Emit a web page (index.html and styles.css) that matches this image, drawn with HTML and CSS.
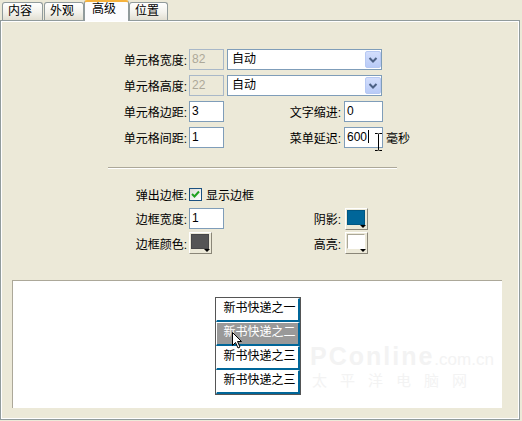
FILE: index.html
```html
<!DOCTYPE html>
<html lang="zh">
<head>
  <meta charset="utf-8">
  <title>菜单属性 - 高级</title>
  <link rel="stylesheet" href="styles.css">
</head>
<body>

  <div class="dialog">
    <div class="tabs">
      <div class="tab tab-1">内容</div>
      <div class="tab tab-2">外观</div>
      <div class="tab active">高级</div>
      <div class="tab tab-4">位置</div>
    </div>

    <div class="panel">
      <!-- cell settings -->
      <div class="grid cells">
        <span class="lbl">单元格宽度:</span>
        <div class="textbox disabled">82</div>
        <div class="select">
          <span class="select-text">自动</span>
          <span class="drop">
            <svg width="16" height="17" viewBox="0 0 16 17"><path d="M4.5 7 L8 10.5 L11.5 7" fill="none" stroke="#4d6185" stroke-width="2"/></svg>
          </span>
        </div>

        <span class="lbl">单元格高度:</span>
        <div class="textbox disabled">22</div>
        <div class="select">
          <span class="select-text">自动</span>
          <span class="drop">
            <svg width="16" height="17" viewBox="0 0 16 17"><path d="M4.5 7 L8 10.5 L11.5 7" fill="none" stroke="#4d6185" stroke-width="2"/></svg>
          </span>
        </div>

        <span class="lbl">单元格边距:</span>
        <div class="textbox">3</div>
        <span class="lbl lbl-2">文字缩进:</span>
        <div class="textbox wide">0</div>

        <span class="lbl">单元格间距:</span>
        <div class="textbox">1</div>
        <span class="lbl lbl-2">菜单延迟:</span>
        <div class="with-unit">
          <div class="textbox wide">600<span class="caret"></span></div>
          <span class="unit">毫秒</span>
          <svg class="ibeam" width="9" height="18" viewBox="0 0 9 18">
            <path d="M1 0.5 H3.5 Q4.5 0.5 4.5 1.5 Q4.5 0.5 5.5 0.5 H8 M4.5 1.5 V16.5 M1 17.5 H3.5 Q4.5 17.5 4.5 16.5 Q4.5 17.5 5.5 17.5 H8" fill="none" stroke="#000" stroke-width="1"/>
          </svg>
        </div>
      </div>

      <div class="sep"></div>

      <!-- popup border settings -->
      <div class="grid border">
        <span class="lbl">弹出边框:</span>
        <label class="check">
          <span class="box">
            <svg width="11" height="11" viewBox="0 0 11 11"><path d="M2 5 L4.5 7.5 L9 2.5" fill="none" stroke="#21a121" stroke-width="2"/></svg>
          </span>
          显示边框
        </label>

        <span class="lbl">边框宽度:</span>
        <div class="textbox">1</div>
        <span class="lbl lbl-2">阴影:</span>
        <div class="swatch"><span class="chip" style="background:#006699"></span></div>

        <span class="lbl">边框颜色:</span>
        <div class="swatch"><span class="chip" style="background:#555555"></span></div>
        <span class="lbl lbl-2">高亮:</span>
        <div class="swatch"><span class="chip light" style="background:#ffffff"></span></div>
      </div>

      <!-- preview -->
      <div class="preview">
        <div class="watermark">
          <div class="wm-top"><b>PConline</b>.com.cn</div>
          <div class="wm-bottom">太平洋电脑网</div>
        </div>
        <ul class="menu">
          <li>新书快递之一</li>
          <li class="hover">新书快递之二</li>
          <li>新书快递之三</li>
          <li>新书快递之三</li>
        </ul>
        <svg class="pointer" width="12" height="17" viewBox="0 0 12 17">
          <path d="M0.5 0.5 V13.5 L3.5 10.5 L6 16 L8 15 L5.5 9.5 L9.5 9.5 Z" fill="#fff" stroke="#000" stroke-width="1"/>
        </svg>
      </div>
    </div>
  </div>

</body>
</html>
```

FILE: styles.css
```css
:root {
  --face: #ece9d8;
  --tab-border: #919b9c;
  --input-border: #7f9db9;
  --shade: #aca899;
  --text: #000;
}

* {
  box-sizing: border-box;
}

body {
  margin: 0;
  background: var(--face);
  color: var(--text);
  font-family: "Liberation Sans", "Noto Sans CJK SC", sans-serif;
  font-size: 12px;
}

.dialog {
  width: 522px;
  height: 421px;
}

/* tabs */
.tabs {
  display: flex;
  align-items: flex-end;
  height: 20px;
  padding-left: 2px;
  position: relative;
  z-index: 1;
}

.tab {
  height: 18px;
  padding-left: 5px;
  line-height: 16px;
  border: 1px solid var(--tab-border);
  border-bottom: none;
  border-radius: 3px 3px 0 0;
  background: linear-gradient(#fff, #f3f2ec 55%, #e2dfd2);
}

.tab-1 { width: 41px; margin-right: 1px; }
.tab-2 { width: 40px; }
.tab-4 { width: 39px; }

.tab.active {
  width: 45px;
  height: 21px;
  margin-bottom: -1px;
  padding-left: 7px;
  line-height: 15px;
  border-top: 2px solid #f5b23d;
  background: #fcfcfe;
}

/* page */
.panel {
  width: 520px;
  height: 400px;
  border: 1px solid var(--tab-border);
  box-shadow: inset 0 0 0 1px #fff;
  padding-top: 28px;
}

.grid {
  display: grid;
  grid-template-columns: 188px 35px 120px auto;
  align-items: center;
}

.cells {
  grid-auto-rows: 21px;
  row-gap: 5px;
}

.border {
  grid-template-rows: 21px 23px 22px;
  row-gap: 2px;
  margin-top: 15px;
}

.lbl {
  text-align: right;
  padding-right: 2px;
  white-space: nowrap;
}

.lbl-2 {
  padding-right: 3px;
}

.textbox {
  width: 35px;
  height: 21px;
  border: 1px solid var(--input-border);
  background: #fff;
  padding-left: 2px;
  line-height: 19px;
  white-space: nowrap;
}

.textbox.wide {
  width: 39px;
}

.textbox.disabled {
  background: var(--face);
  border-color: #a9b8c8;
  color: var(--shade);
}

.caret {
  display: inline-block;
  width: 1px;
  height: 13px;
  margin-left: 1px;
  background: #000;
  vertical-align: -2px;
}

.select {
  grid-column: span 2;
  width: 155px;
  height: 21px;
  margin-left: 3px;
  display: flex;
  justify-content: space-between;
  border: 1px solid var(--input-border);
  background: #fff;
  padding: 1px 0 1px 4px;
}

.select-text {
  line-height: 17px;
}

.drop {
  width: 16px;
  height: 17px;
  border: 1px solid #b7c9f3;
  border-radius: 2px;
  background: linear-gradient(#d3defc, #b9cbf7);
}

.drop svg {
  display: block;
  margin: -1px 0 0 -1px;
}

.with-unit {
  display: flex;
  align-items: center;
  position: relative;
}

.unit {
  margin-left: 3px;
}

.ibeam {
  position: absolute;
  left: 30px;
  top: 6px;
}

.sep {
  width: 289px;
  margin: 19px 0 0 107px;
  border-top: 1px solid var(--shade);
  border-bottom: 1px solid #fff;
}

.check {
  grid-column: span 3;
  display: flex;
  align-items: center;
  gap: 4px;
}

.box {
  width: 13px;
  height: 13px;
  border: 1px solid #1c5180;
  background: linear-gradient(135deg, #dcdcd7, #fff);
}

.box svg {
  display: block;
}

.swatch {
  position: relative;
  width: 23px;
  height: 22px;
  padding: 1px 2px 4px 1px;
  border: 1px solid;
  border-color: #fff #8a8678 #8a8678 #fff;
  background: var(--face);
}

.lbl-2 + .swatch {
  margin-left: 1px;
}

.swatch::after {
  content: "";
  position: absolute;
  right: 1px;
  bottom: 1px;
  border-left: 3px solid transparent;
  border-right: 3px solid transparent;
  border-top: 3px solid #000;
}

.chip {
  display: block;
  width: 100%;
  height: 100%;
  border: 1px solid rgba(0, 0, 0, 0.15);
}

.chip.light {
  border-color: var(--shade) #fff #fff var(--shade);
}

/* preview */
.preview {
  position: relative;
  width: 490px;
  height: 128px;
  margin: 26px 0 0 11px;
  padding-top: 16px;
  display: flex;
  justify-content: center;
  background: #fff;
  border-top: 1px solid var(--shade);
  border-left: 1px solid var(--shade);
  overflow: hidden;
}

.menu {
  position: relative;
  list-style: none;
  margin: 0;
  padding: 0;
  width: 86px;
  height: 98px;
  border: 1px solid #555;
  background: #fff;
  z-index: 1;
}

.menu li {
  height: 24px;
  padding-left: 7px;
  line-height: 19px;
  white-space: nowrap;
  border-top: 1px solid #fff;
  border-left: 1px solid #fff;
  border-right: 2px solid #006699;
  border-bottom: 2px solid #006699;
}

.menu li.hover {
  background: #999;
  color: #fff;
}

.pointer {
  position: absolute;
  left: 219px;
  top: 51px;
  z-index: 2;
}

.watermark {
  position: absolute;
  left: 297px;
  top: 64px;
  color: #f3f3f3;
  white-space: nowrap;
}

.wm-top {
  font-size: 17px;
  line-height: 22px;
}

.wm-top b {
  font-size: 25px;
  letter-spacing: 2px;
}

.wm-bottom {
  font-size: 15px;
  letter-spacing: 13px;
  line-height: 20px;
  padding-left: 2px;
}
```
